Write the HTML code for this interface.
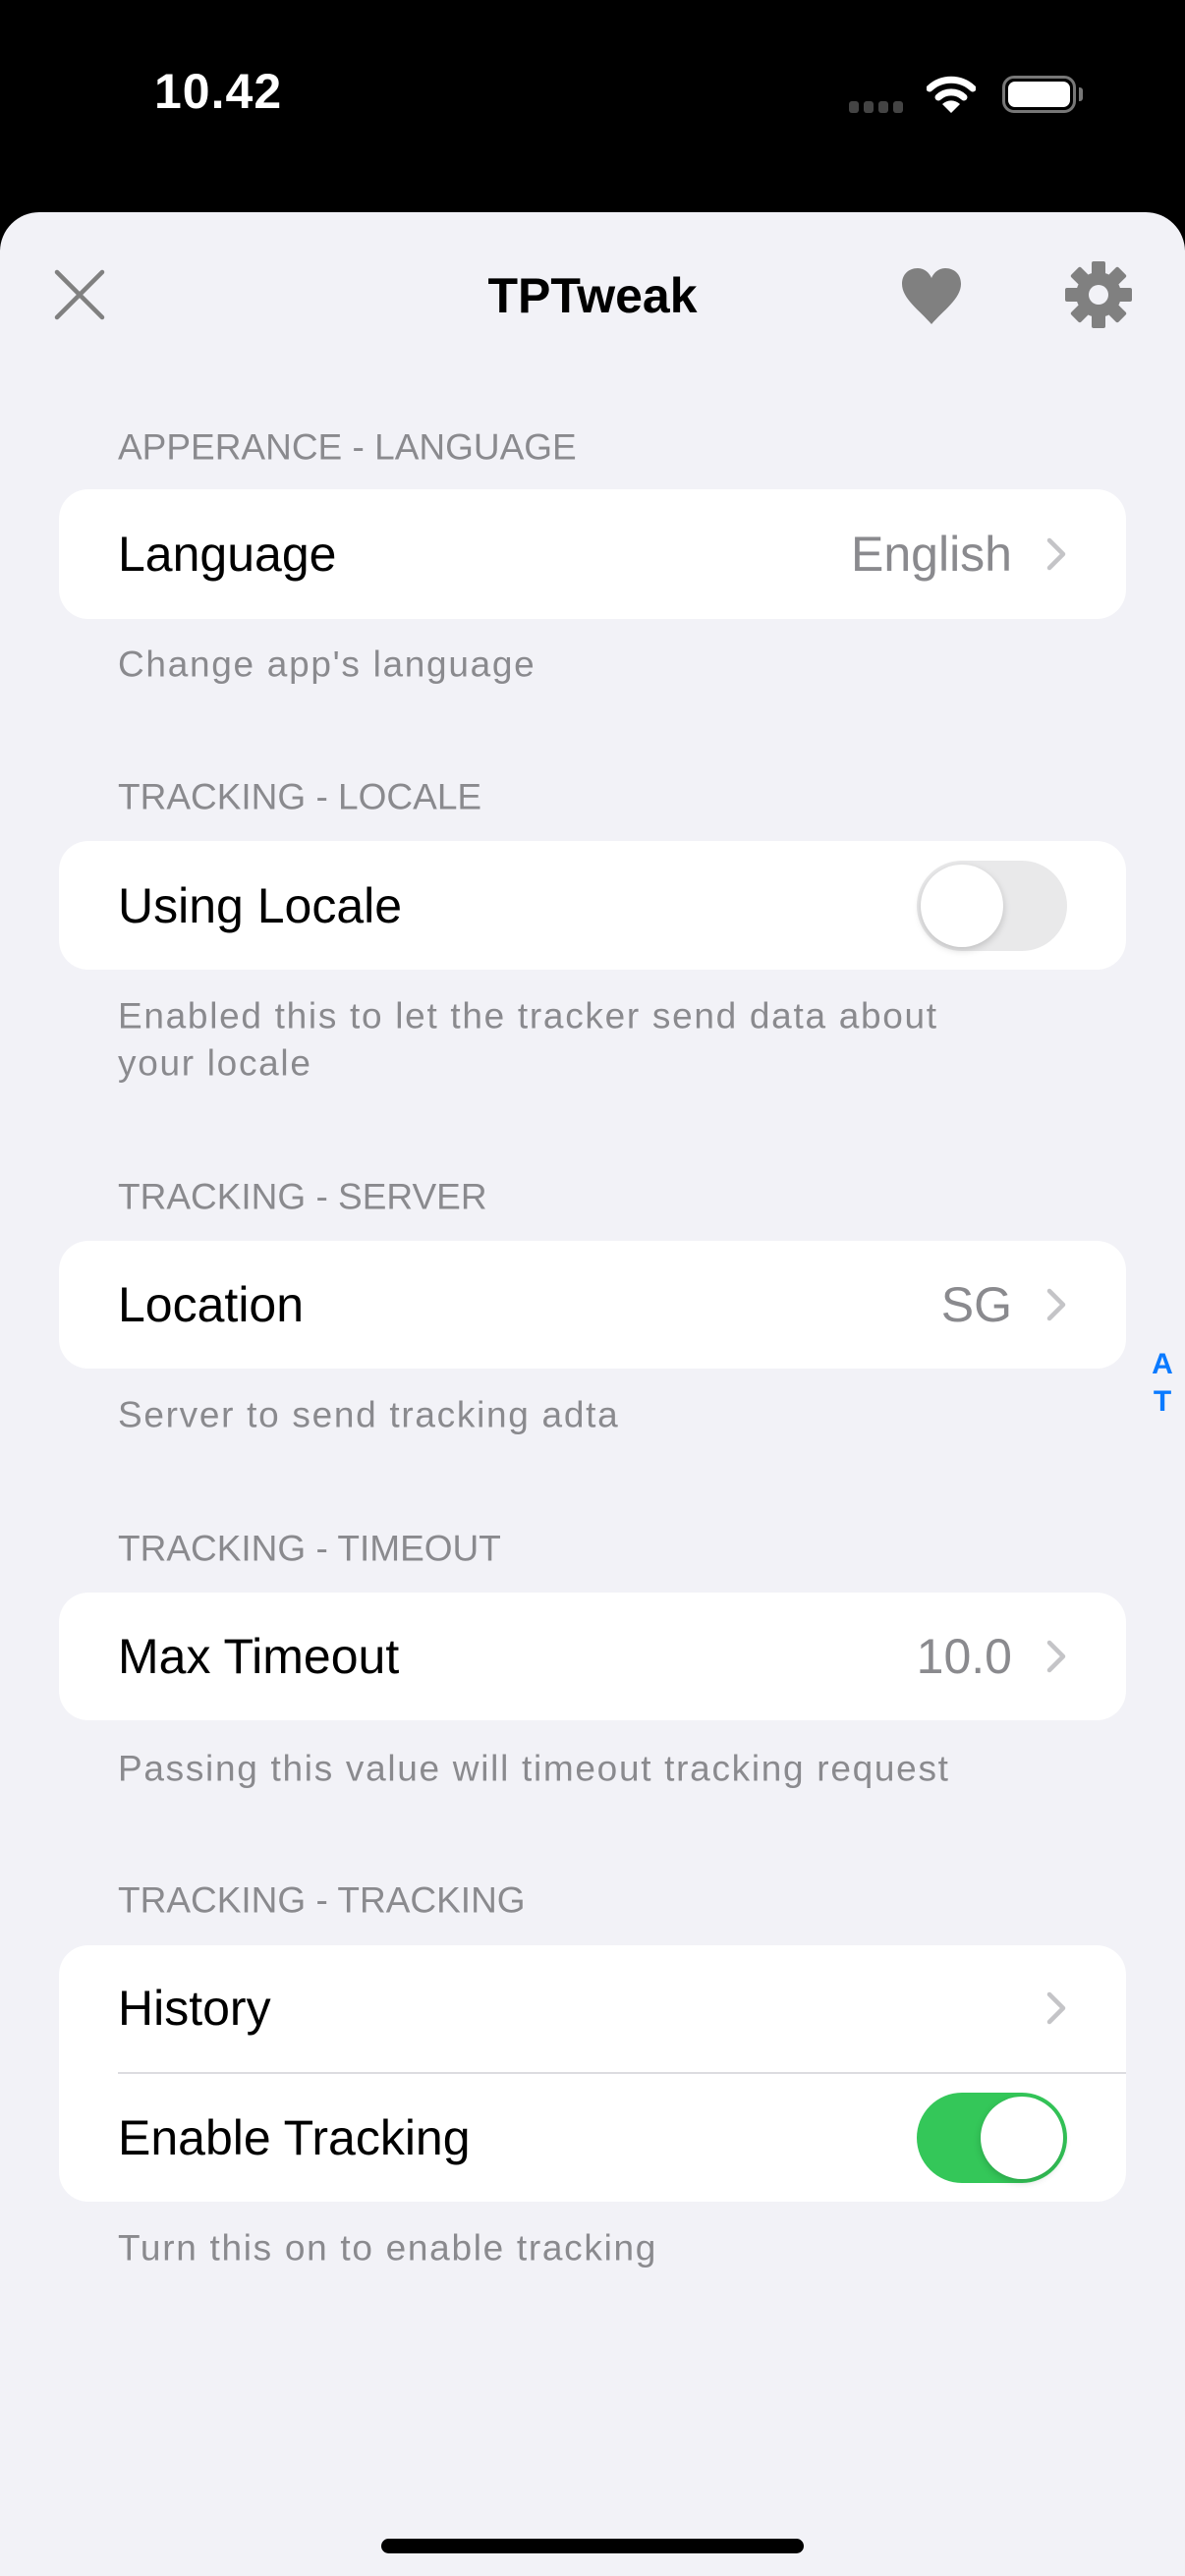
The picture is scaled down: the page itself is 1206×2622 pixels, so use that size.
<!DOCTYPE html>
<html><head><meta charset="utf-8"><style>
*{margin:0;padding:0;box-sizing:border-box}
body{width:1206px;height:2622px;background:#000;font-family:"Liberation Sans",sans-serif;position:relative;overflow:hidden}
.abs{position:absolute}
.sheet{position:absolute;left:0;top:216px;width:1206px;height:2406px;background:#f2f2f7;border-radius:40px 40px 0 0}
.hdr{position:absolute;left:120px;font-size:37px;color:#8a8a8e;line-height:1;transform:translateY(-50%)}
.ft{letter-spacing:1.7px}
.card{position:absolute;left:60px;width:1086px;background:#fff;border-radius:30px}
.lbl{position:absolute;left:60px;font-size:50px;color:#000;line-height:1;transform:translateY(-50%)}
.val{position:absolute;right:116px;font-size:50px;color:#8a8a8e;line-height:1;transform:translateY(-50%)}
.chev{position:absolute;right:60px;transform:translateY(-50%)}
.tg{position:absolute;right:60px;width:153px;height:92px;border-radius:46px;transform:translateY(-50%)}
.knob{position:absolute;top:4px;width:84px;height:84px;border-radius:42px;background:#fff;box-shadow:0 3px 8px rgba(0,0,0,.18)}
</style></head><body>
<div class="abs" style="left:157px;top:68px;font-size:50px;font-weight:bold;color:#fff;line-height:1;letter-spacing:1px">10.42</div>
<div class="abs" style="left:864px;top:103px;width:60px;height:12px">
<span class="abs" style="left:0;width:10px;height:12px;border-radius:3px;background:#444"></span>
<span class="abs" style="left:15px;width:10px;height:12px;border-radius:3px;background:#444"></span>
<span class="abs" style="left:30px;width:10px;height:12px;border-radius:3px;background:#444"></span>
<span class="abs" style="left:45px;width:10px;height:12px;border-radius:3px;background:#444"></span></div>
<svg class="abs" style="left:943px;top:76px" width="50" height="40" viewBox="0 0 50 40"><path d="M3 14 A32 32 0 0 1 47 14" stroke="#fff" stroke-width="7" fill="none" stroke-linecap="round"/><path d="M12 23 A19 19 0 0 1 38 23" stroke="#fff" stroke-width="7" fill="none" stroke-linecap="round"/><path d="M25 39 L16 30 A13 13 0 0 1 34 30 Z" fill="#fff"/></svg>
<div class="abs" style="left:1020px;top:77px;width:75px;height:38px;border:3px solid #777;border-radius:12px"><div style="margin:3px;height:26px;background:#fff;border-radius:7px"></div></div>
<div class="abs" style="left:1098px;top:89px;width:4px;height:14px;background:#777;border-radius:0 3px 3px 0"></div>
<div class="sheet"></div>
<svg class="abs" style="left:55px;top:274px" width="52" height="52" viewBox="0 0 52 52"><path d="M3 3L49 49M49 3L3 49" stroke="#808080" stroke-width="4.5" stroke-linecap="round"/></svg>
<div class="abs" style="left:0;width:1206px;top:301px;text-align:center;font-size:50px;font-weight:bold;line-height:1;transform:translateY(-50%)">TPTweak</div>
<svg class="abs" style="left:916px;top:272px" width="64" height="60" viewBox="0 0 64 60"><path d="M32 58 C20 44 2 32 2 17 C2 7 9 1 18 1 C25 1 30 6 32 11 C34 6 39 1 46 1 C55 1 62 7 62 17 C62 32 44 44 32 58Z" fill="#808080"/></svg>
<svg class="abs" style="left:1084px;top:266px" width="68" height="68" viewBox="-34 -34 68 68"><g fill="#808080"><circle r="23"/>
<g id="t"><rect x="-7" y="-34" width="14" height="16" rx="2"/></g>
<use href="#t" transform="rotate(45)"/><use href="#t" transform="rotate(90)"/><use href="#t" transform="rotate(135)"/><use href="#t" transform="rotate(180)"/><use href="#t" transform="rotate(225)"/><use href="#t" transform="rotate(270)"/><use href="#t" transform="rotate(315)"/></g><circle r="10" fill="#f2f2f7"/></svg>

<div class="hdr" style="top:455px">APPERANCE - LANGUAGE</div>
<div class="card" style="top:498px;height:132px">
<div class="lbl" style="top:66px">Language</div><div class="val" style="top:66px">English</div>
<svg class="chev" style="top:66px" width="22" height="36" viewBox="0 0 22 36"><path d="M4 4L18 18L4 32" stroke="#c4c4c7" stroke-width="4.5" fill="none" stroke-linecap="round" stroke-linejoin="round"/></svg></div>
<div class="hdr ft" style="top:676px">Change app's language</div>

<div class="hdr" style="top:811px">TRACKING - LOCALE</div>
<div class="card" style="top:856px;height:131px">
<div class="lbl" style="top:66px">Using Locale</div>
<div class="tg" style="top:66px;background:#e9e9ea"><div class="knob" style="left:4px"></div></div></div>
<div class="hdr ft" style="top:1034px">Enabled this to let the tracker send data about</div>
<div class="hdr ft" style="top:1082px">your locale</div>

<div class="hdr" style="top:1218px">TRACKING - SERVER</div>
<div class="card" style="top:1263px;height:130px">
<div class="lbl" style="top:65px">Location</div><div class="val" style="top:65px">SG</div>
<svg class="chev" style="top:65px" width="22" height="36" viewBox="0 0 22 36"><path d="M4 4L18 18L4 32" stroke="#c4c4c7" stroke-width="4.5" fill="none" stroke-linecap="round" stroke-linejoin="round"/></svg></div>
<div class="hdr ft" style="top:1440px">Server to send tracking adta</div>
<div class="abs" style="left:1172px;top:1370px;font-size:30px;font-weight:bold;color:#0a7aff;line-height:38px;text-align:center;width:22px">A<br>T</div>

<div class="hdr" style="top:1576px">TRACKING - TIMEOUT</div>
<div class="card" style="top:1621px;height:130px">
<div class="lbl" style="top:65px">Max Timeout</div><div class="val" style="top:65px">10.0</div>
<svg class="chev" style="top:65px" width="22" height="36" viewBox="0 0 22 36"><path d="M4 4L18 18L4 32" stroke="#c4c4c7" stroke-width="4.5" fill="none" stroke-linecap="round" stroke-linejoin="round"/></svg></div>
<div class="hdr ft" style="top:1800px">Passing this value will timeout tracking request</div>

<div class="hdr" style="top:1934px">TRACKING - TRACKING</div>
<div class="card" style="top:1980px;height:261px">
<div class="lbl" style="top:64px">History</div>
<svg class="chev" style="top:64px" width="22" height="36" viewBox="0 0 22 36"><path d="M4 4L18 18L4 32" stroke="#c4c4c7" stroke-width="4.5" fill="none" stroke-linecap="round" stroke-linejoin="round"/></svg>
<div class="abs" style="left:60px;right:0;top:129px;height:2px;background:#dcdce0"></div>
<div class="lbl" style="top:196px">Enable Tracking</div>
<div class="tg" style="top:196px;background:#34c759"><div class="knob" style="left:65px"></div></div></div>
<div class="hdr ft" style="top:2288px">Turn this on to enable tracking</div>

<div class="abs" style="left:388px;top:2584px;width:430px;height:15px;border-radius:8px;background:#000"></div>
</body></html>
